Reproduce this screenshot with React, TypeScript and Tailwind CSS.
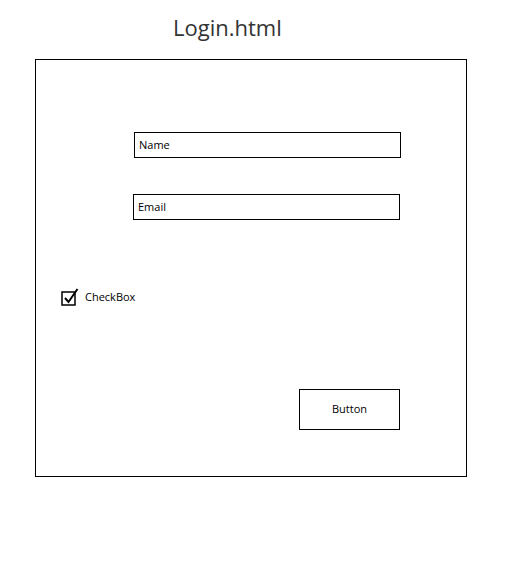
import React from "react";

export default function App() {
  return (
    <div className="w-[531px] h-[576px] bg-white" style={{ fontFamily: '"Open Sans", "Noto Sans", sans-serif' }}>
      <div className="pt-[12px] pl-[173px] h-[59px]">
        <div className="text-[22px] leading-[30px] text-[#333333]">Login.html</div>
      </div>
      <div className="ml-[35px] w-[432px] h-[418px] border border-black flex flex-col">
        <div className="ml-[98px] mt-[72px] w-[267px] h-[26px] border border-black flex items-center pl-[4px] text-[11px] text-black">
          Name
        </div>
        <div className="ml-[97px] mt-[36px] w-[267px] h-[26px] border border-black flex items-center pl-[4px] text-[11px] text-black">
          Email
        </div>
        <div className="ml-[25px] mt-[67px] flex items-center h-[20px]">
          <svg width="18" height="18" viewBox="0 0 18 18" className="block">
            <rect x="1" y="4" width="13" height="13" fill="none" stroke="black" strokeWidth="1.5" />
            <path d="M4 10 L7.5 14 L16.5 1" fill="none" stroke="black" strokeWidth="2" />
          </svg>
          <span className="ml-[6px] text-[11px] text-black">CheckBox</span>
        </div>
        <div className="ml-[263px] mt-[82px] w-[101px] h-[41px] border border-black flex items-center justify-center text-[11px] text-black">
          Button
        </div>
      </div>
    </div>
  );
}
